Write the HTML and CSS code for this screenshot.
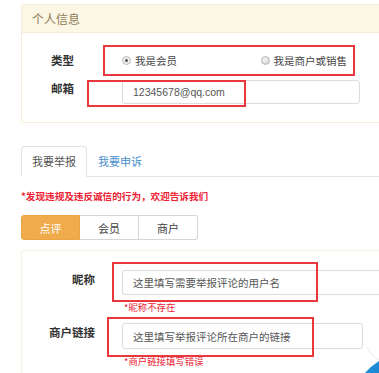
FILE: index.html
```html
<!DOCTYPE html>
<html lang="zh">
<head>
<meta charset="utf-8">
<link rel="stylesheet" href="styles.css">
</head>
<body>
<div class="page">
  <div class="panel panel-top">
    <div class="panel-heading">个人信息</div>
    <div class="panel-body">
      <div class="row">
        <div class="label">类型</div>
        <div class="radios">
          <span class="radio"><span class="dot checked"></span>我是会员</span>
          <span class="radio radio-right"><span class="dot"></span>我是商户或销售</span>
        </div>
      </div>
      <div class="row">
        <div class="label label-raised">邮箱</div>
        <div class="input email">12345678@qq.com</div>
      </div>
    </div>
    <div class="mark mark-type"></div>
    <div class="mark mark-email"></div>
  </div>

  <div class="tabs">
    <div class="tab active">我要举报</div>
    <div class="tab link">我要申诉</div>
  </div>

  <div class="notice">*发现违规及违反诚信的行为，欢迎告诉我们</div>

  <div class="segments">
    <div class="seg on">点评</div>
    <div class="seg">会员</div>
    <div class="seg">商户</div>
  </div>

  <div class="panel panel-bottom">
    <div class="field">
      <div class="flabel">昵称</div>
      <div class="fcontrol">
        <div class="input wide">这里填写需要举报评论的用户名</div>
        <div class="err">*昵称不存在</div>
      </div>
    </div>
    <div class="field">
      <div class="flabel">商户链接</div>
      <div class="fcontrol">
        <div class="input narrow">这里填写举报评论所在商户的链接</div>
        <div class="err">*商户链接填写错误</div>
      </div>
    </div>
    <div class="mark mark-nick"></div>
    <div class="mark mark-link"></div>
  </div>
</div>
<svg class="corner" width="20" height="26" viewBox="0 0 20 26">
  <path d="M8 0 Q14 10 20 13" fill="none" stroke="#e6e9ec" stroke-width="1"/>
  <path d="M6 26 Q12 19 20 14 L20 26 Z" fill="#1d8ad6"/>
</svg>
</body>
</html>
```

FILE: styles.css
```css
html, body {
  margin: 0;
  padding: 0;
  background: #fff;
  overflow: hidden;
  width: 379px;
  height: 373px;
}

body {
  font-family: "Noto Sans CJK SC", "Liberation Sans", sans-serif;
  color: #555;
  font-size: 11px;
  position: relative;
}

.page {
  padding: 4px 0 0 21px;
}

.panel {
  position: relative;
  width: 358px;
  border: 1px solid #f7ecd6;
  border-right: none;
  border-radius: 3px 0 0 3px;
  background: #fff;
  box-sizing: border-box;
}

.panel-heading {
  height: 27px;
  line-height: 27px;
  padding-left: 10px;
  background: #fcf6e4;
  border-bottom: 1px solid #f7ecd6;
  color: #8f7c5a;
  font-size: 12px;
}

.panel-body {
  padding: 15px 0 18px 0;
  display: flex;
  flex-direction: column;
  gap: 8px;
}

.row {
  display: flex;
  align-items: center;
  height: 24px;
}

.label {
  width: 52px;
  text-align: right;
  font-weight: 700;
  font-size: 11.5px;
  color: #333;
  margin-right: 48px;
  line-height: 16px;
}

.label-raised {
  align-self: flex-start;
}

.radios {
  width: 238px;
  display: flex;
  align-items: center;
}

.radio {
  display: flex;
  align-items: center;
  font-size: 10.5px;
  color: #444;
}

.radio-right {
  margin-left: auto;
  margin-right: 13px;
}

.dot {
  width: 7px;
  height: 7px;
  border-radius: 50%;
  border: 1px solid #b9b9b9;
  background: radial-gradient(circle at 40% 35%, #f4f4f4, #cfcfcf);
  margin-right: 4px;
  position: relative;
}

.dot.checked {
  background: #eee;
}

.dot.checked::after {
  content: "";
  position: absolute;
  left: 2px;
  top: 2px;
  width: 3px;
  height: 3px;
  border-radius: 50%;
  background: #555;
}

.input {
  box-sizing: border-box;
  border: 1px solid #dcdcdc;
  border-radius: 3px;
  background: #fff;
  padding-left: 10px;
  font-size: 10.5px;
  color: #555;
  display: flex;
  align-items: center;
}

.email {
  width: 238px;
  height: 24px;
  font-family: "Liberation Sans", Arial, sans-serif;
}

.mark {
  position: absolute;
  box-sizing: border-box;
  border: 2px solid #e8383d;
}

.mark-type {
  left: 81px;
  top: 40px;
  width: 252px;
  height: 31px;
}

.mark-email {
  left: 65px;
  top: 75px;
  width: 159px;
  height: 27px;
}

.tabs {
  margin-top: 23px;
  display: flex;
  border-bottom: 1px solid #e3e3e3;
  height: 30px;
}

.tab {
  padding: 0 11px;
  line-height: 30px;
  font-size: 11px;
  box-sizing: border-box;
}

.tab.active {
  border: 1px solid #e3e3e3;
  border-bottom: 1px solid #fff;
  border-radius: 4px 4px 0 0;
  height: 31px;
  line-height: 29px;
  padding: 0 10px;
  color: #555;
  background: #fff;
}

.tab.link {
  color: #4b8fcc;
}

.notice {
  margin-top: 12px;
  line-height: 14px;
  font-size: 9.6px;
  color: #ee2233;
  font-weight: 700;
}

.segments {
  margin-top: 12px;
  display: flex;
  height: 25px;
}

.seg {
  box-sizing: border-box;
  width: 59px;
  border: 1px solid #d6d6d6;
  border-left: none;
  display: flex;
  align-items: center;
  justify-content: center;
  font-size: 11px;
  color: #444;
  background: #fff;
}

.seg:last-child {
  border-radius: 0 3px 3px 0;
}

.seg.on {
  background: #f0ac4c;
  border: 1px solid #eaa443;
  color: #fff;
  border-radius: 3px 0 0 3px;
}

.panel-bottom {
  margin-top: 10px;
  padding-top: 19px;
  border-color: #f6f1e3;
  height: 140px;
}

.field {
  display: flex;
  margin-bottom: 10px;
}

.flabel {
  width: 73px;
  text-align: right;
  font-weight: 700;
  font-size: 11.5px;
  color: #333;
  line-height: 18px;
  margin-right: 27px;
}

.fcontrol {
  display: flex;
  flex-direction: column;
}

.wide {
  width: 257px;
  height: 25px;
  border-right: none;
  border-radius: 3px 0 0 3px;
}

.narrow {
  width: 241px;
  height: 26px;
}

.err {
  margin-top: 6px;
  padding-left: 2px;
  line-height: 12px;
  font-size: 9.4px;
  color: #ee2233;
}

.mark-nick {
  left: 90px;
  top: 11px;
  width: 206px;
  height: 40px;
}

.mark-link {
  left: 85px;
  top: 66px;
  width: 207px;
  height: 40px;
}

.corner {
  position: absolute;
  right: 0;
  bottom: 0;
}
```
